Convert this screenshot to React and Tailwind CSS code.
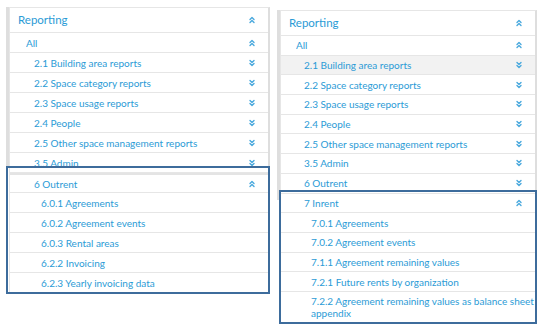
const BLUE = 'text-[#2b9bd6]';

function Chevrons({ up }) {
  return (
    <svg width="6" height="8" viewBox="0 0 6 8" className="text-[#4aa9dd]">
      {up ? (
        <g fill="none" stroke="currentColor" strokeWidth="1.4" strokeLinecap="round" strokeLinejoin="round">
          <polyline points="1,3.5 3,1.5 5,3.5" />
          <polyline points="1,6.5 3,4.5 5,6.5" />
        </g>
      ) : (
        <g fill="none" stroke="currentColor" strokeWidth="1.4" strokeLinecap="round" strokeLinejoin="round">
          <polyline points="1,1.5 3,3.5 5,1.5" />
          <polyline points="1,4.5 3,6.5 5,4.5" />
        </g>
      )}
    </svg>
  );
}

function Row({ label, indent, chevron, h, shade, top }) {
  return (
    <div
      className={`flex items-center border-b border-[#e6e6e6] pr-[13px] ${shade ? 'bg-[#f2f2f2]' : 'bg-white'} ${top ? 'border-t-2 border-t-[#e4e4e4]' : ''}`}
      style={{ height: h, paddingLeft: indent }}
    >
      <span className={`flex-1 truncate ${BLUE} text-[10px] leading-[12px]`}>{label}</span>
      {chevron && <Chevrons up={chevron === 'up'} />}
    </div>
  );
}

function Panel({ rows, h, pad, barH }) {
  return (
    <div className="flex">
      <div className="w-[3px] bg-[#dedede]" style={{ height: barH }} />
      <div className="flex-1 border-t border-l border-[#e6e6e6] border-r-2 border-r-[#dedede]">
        <div className="h-[25px] flex items-center border-b border-[#e6e6e6] pr-[13px]" style={{ paddingLeft: pad[0] }}>
          <span className={`flex-1 ${BLUE} text-[11.5px]`}>Reporting</span>
          <Chevrons up />
        </div>
        {rows.map((r) =>
          r.two ? (
            <div key={r.label} className="border-b border-[#e6e6e6] pr-[1px] py-[3px]" style={{ paddingLeft: pad[r.lvl] }}>
              <span className={`${BLUE} text-[10px] leading-[12px] block`}>{r.label}</span>
            </div>
          ) : (
            <Row key={r.label} label={r.label} indent={pad[r.lvl]} chevron={r.c} h={h} shade={r.shade} top={r.top} />
          )
        )}
      </div>
    </div>
  );
}

const leftRows = [
  { label: 'All', lvl: 1, c: 'up' },
  { label: '2.1 Building area reports', lvl: 2, c: 'down' },
  { label: '2.2 Space category reports', lvl: 2, c: 'down' },
  { label: '2.3 Space usage reports', lvl: 2, c: 'down' },
  { label: '2.4 People', lvl: 2, c: 'down' },
  { label: '2.5 Other space management reports', lvl: 2, c: 'down' },
  { label: '3.5 Admin', lvl: 2, c: 'down' },
  { label: '6 Outrent', lvl: 2, c: 'up', top: true },
  { label: '6.0.1 Agreements', lvl: 3 },
  { label: '6.0.2 Agreement events', lvl: 3 },
  { label: '6.0.3 Rental areas', lvl: 3 },
  { label: '6.2.2 Invoicing', lvl: 3 },
  { label: '6.2.3 Yearly invoicing data', lvl: 3 },
];

const rightRows = [
  { label: 'All', lvl: 1, c: 'up' },
  { label: '2.1 Building area reports', lvl: 2, c: 'down', shade: true },
  { label: '2.2 Space category reports', lvl: 2, c: 'down' },
  { label: '2.3 Space usage reports', lvl: 2, c: 'down' },
  { label: '2.4 People', lvl: 2, c: 'down' },
  { label: '2.5 Other space management reports', lvl: 2, c: 'down' },
  { label: '3.5 Admin', lvl: 2, c: 'down' },
  { label: '6 Outrent', lvl: 2, c: 'down' },
  { label: '7 Inrent', lvl: 2, c: 'up' },
  { label: '7.0.1 Agreements', lvl: 3 },
  { label: '7.0.2 Agreement events', lvl: 3 },
  { label: '7.1.1 Agreement remaining values', lvl: 3 },
  { label: '7.2.1 Future rents by organization', lvl: 3 },
  { label: '7.2.2 Agreement remaining values as balance sheet appendix', lvl: 3, two: true },
];

export default function App() {
  return (
    <div className="relative w-[547px] h-[335px] bg-white overflow-hidden flex items-start gap-[7px] pl-[6px] font-['Lato',sans-serif]">
      <div className="w-[264px] mt-[7px]">
        <Panel rows={leftRows} h={20} pad={[8, 16, 24, 31]} barH={160} />
      </div>
      <div className="w-[260px] mt-[10px]">
        <Panel rows={rightRows} h={19.7} pad={[8, 15, 23, 30]} barH={190} />
      </div>
      <div className="absolute left-[6px] top-[166px] w-[264px] h-[128px] border-2 border-[#3d6c9c]" />
      <div className="absolute left-[279px] top-[190px] w-[258px] h-[134px] border-2 border-[#3d6c9c]" />
    </div>
  );
}
